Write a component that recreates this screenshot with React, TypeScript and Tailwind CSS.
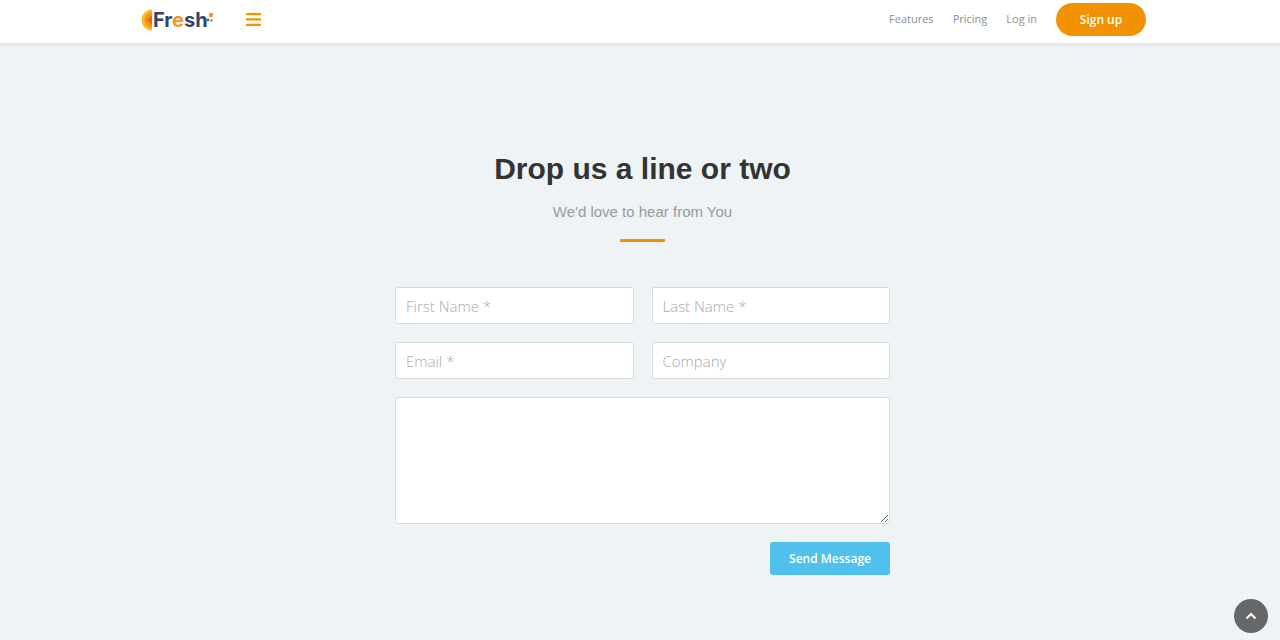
const fields = [
  { id: "first-name", label: "First Name *", type: "text", required: true },
  { id: "last-name", label: "Last Name *", type: "text", required: true },
  { id: "email", label: "Email *", type: "email", required: true },
  { id: "company", label: "Company", type: "text", required: false },
];

function Logo() {
  return (
    <a href="#home" aria-label="Fresh" className="relative flex h-6 w-[74px] items-center">
      <svg viewBox="0 0 12 22" className="h-[22px] w-3 shrink-0" aria-hidden="true">
        <path d="M11 0.5A10.5 10.5 0 0 0 11 21.5Z" fill="#fbbc1c" />
        <path d="M11 3.5A7.5 7.5 0 0 0 11 18.5Z" fill="#f7931e" />
        <path d="M11 6L6 11L11 16Z" fill="#ee6a10" />
      </svg>
      <span className="font-[Inter,sans-serif] text-[20px] leading-6 font-bold text-[#34435e]">
        Fr<span className="text-[#f7931e]">e</span>sh
      </span>
      <svg viewBox="0 0 8 12" className="absolute top-1 right-0 h-3 w-2" aria-hidden="true">
        <circle cx="4" cy="3" r="2.2" fill="#f7931e" />
        <circle cx="1" cy="8" r="1.2" fill="#34435e" />
        <circle cx="4.5" cy="8.5" r="1" fill="#34435e" />
      </svg>
    </a>
  );
}

function Header() {
  return (
    <header className="bg-white shadow-[0_1px_4px_rgba(0,0,0,0.1)]">
      <div className="mx-auto flex h-[43px] max-w-[1012px] items-start justify-between pl-[7px]">
        <div className="flex h-[39px] items-center">
          <Logo />
          <button type="button" aria-label="Open menu" className="ml-[31px] text-[#f39200]">
            <svg viewBox="0 0 15 13" className="h-[13px] w-[15px]" fill="currentColor" aria-hidden="true">
              <rect width="15" height="2.3" rx="0.5" />
              <rect y="5.3" width="15" height="2.3" rx="0.5" />
              <rect y="10.7" width="15" height="2.3" rx="0.5" />
            </svg>
          </button>
        </div>
        <nav className="flex h-[39px] items-center gap-[19px] text-[11px] text-[#8f8f8f]">
          <a href="#features">Features</a>
          <a href="#pricing">Pricing</a>
          <a href="#login">Log in</a>
          <a
            href="#signup"
            className="flex h-[33px] w-[90px] items-center justify-center rounded-full bg-[#f39200] text-xs font-semibold text-white"
          >
            Sign up
          </a>
        </nav>
      </div>
    </header>
  );
}

export default function App() {
  return (
    <div className="min-h-screen bg-[#eef4f6] font-['Open_Sans',sans-serif]">
      <Header />
      <main className="flex flex-col items-center pt-[106px] pb-16 pl-[5px]">
        <h1 className="font-['Liberation_Sans',sans-serif] text-[30px] leading-10 font-bold text-[#333]">
          Drop us a line or two
        </h1>
        <p className="mt-[11px] font-['Liberation_Sans',sans-serif] text-[15px] leading-6 text-[#999]">
          We'd love to hear from You
        </p>
        <div className="mt-[15px] h-[3px] w-[45px] rounded-[1px] bg-[#f39200]" />
        <form className="mt-[45px] flex w-full max-w-[495px] flex-col gap-[18px]">
          <div className="grid grid-cols-2 gap-[18px]">
            {fields.map((field) => (
              <input
                key={field.id}
                id={field.id}
                name={field.id}
                type={field.type}
                required={field.required}
                aria-label={field.label}
                placeholder={field.label}
                className="h-[37px] w-full rounded-[3px] border border-[#dadada] bg-white px-[10px] text-[15px] font-light text-[#333] placeholder:text-[#aaa]"
              />
            ))}
          </div>
          <textarea
            aria-label="Message"
            className="block h-[127px] w-full resize rounded-[3px] border border-[#dadada] bg-white p-[10px] text-[15px] font-light"
          />
          <button
            type="submit"
            className="h-[33px] w-[120px] self-end rounded-[3px] bg-[#50c1ec] pt-px text-xs font-semibold text-white"
          >
            Send Message
          </button>
        </form>
      </main>
      <button
        type="button"
        aria-label="Back to top"
        className="fixed right-3 bottom-[7px] flex size-[34px] items-center justify-center rounded-full bg-[#666769] text-white"
      >
        <svg
          viewBox="0 0 12 8"
          className="h-2 w-3"
          fill="none"
          stroke="currentColor"
          strokeWidth="2"
          aria-hidden="true"
        >
          <path d="M1.5 6.5L6 2L10.5 6.5" />
        </svg>
      </button>
    </div>
  );
}
